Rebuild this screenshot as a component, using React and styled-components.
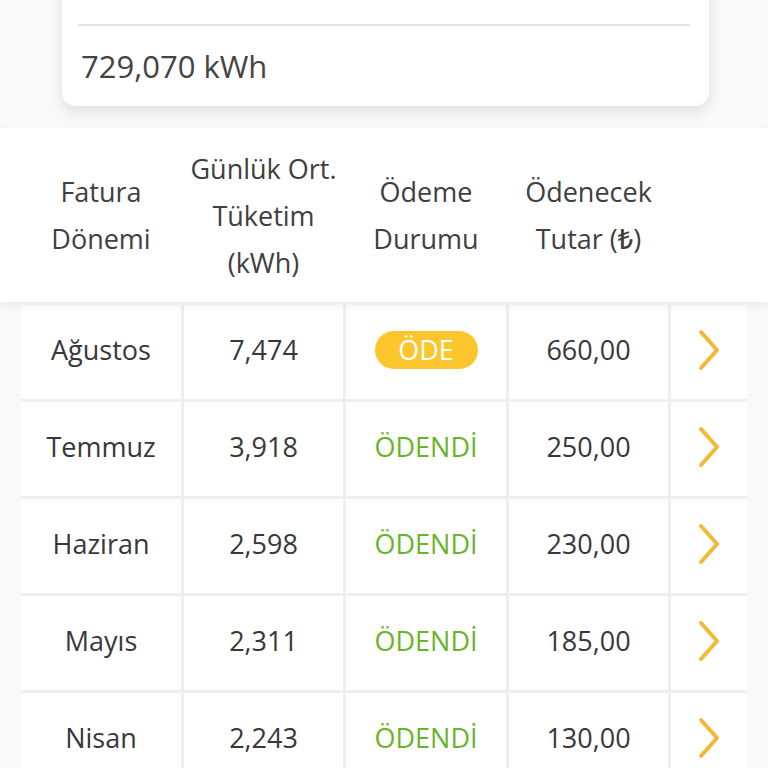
import styled, { createGlobalStyle } from "styled-components";

const GlobalStyle = createGlobalStyle`
    html, body {
        margin: 0;
        padding: 0;
        background: #f9f9f9;
        overflow: hidden;
    }
    body {
        font-family: "Open Sans", "Noto Sans", sans-serif;
        color: #3a3a3a;
    }
`;

const cols = "160px 159px 160px 159px 76px";

const rows = [
    { month: "Ağustos", avg: "7,474", paid: false, amount: "660,00" },
    { month: "Temmuz", avg: "3,918", paid: true, amount: "250,00" },
    { month: "Haziran", avg: "2,598", paid: true, amount: "230,00" },
    { month: "Mayıs", avg: "2,311", paid: true, amount: "185,00" },
    { month: "Nisan", avg: "2,243", paid: true, amount: "130,00" },
];

function Chevron() {
    return (
        <svg width="26" height="44" viewBox="0 0 26 44">
            <polyline
                points="5,4 21,22 5,40"
                fill="none"
                stroke="#f3b834"
                strokeWidth="4"
                strokeLinecap="round"
                strokeLinejoin="round"
            />
        </svg>
    );
}

export default function App() {
    return (
        <Page>
            <GlobalStyle />
            <Card>
                <CardTop />
                <Divider />
                <Total>729,070 kWh</Total>
            </Card>
            <HeaderBand>
                <HeadCell>Fatura<br />Dönemi</HeadCell>
                <HeadCell>Günlük Ort.<br />Tüketim<br />(kWh)</HeadCell>
                <HeadCell>Ödeme<br />Durumu</HeadCell>
                <HeadCell>Ödenecek<br />Tutar (₺)</HeadCell>
                <HeadCell />
            </HeaderBand>
            <Body>
                {rows.map((r) => (
                    <Row key={r.month}>
                        <Cell>{r.month}</Cell>
                        <Cell>{r.avg}</Cell>
                        <Cell>
                            {r.paid ? <Paid>ÖDENDİ</Paid> : <PayButton>ÖDE</PayButton>}
                        </Cell>
                        <Cell>{r.amount}</Cell>
                        <Cell><Chevron /></Cell>
                    </Row>
                ))}
            </Body>
        </Page>
    );
}

const Page = styled.div`
    width: 768px;
    height: 768px;
    overflow: hidden;
`;

const Card = styled.div`
    width: 647px;
    margin: -30px 0 0 62px;
    padding: 0 19px 0 16px;
    box-sizing: border-box;
    background: #ffffff;
    border-radius: 14px;
    box-shadow: 0 6px 14px rgba(0, 0, 0, 0.1);
`;

const CardTop = styled.div`
    height: 54px;
`;

const Divider = styled.div`
    height: 2px;
    background: #e2e2e2;
`;

const Total = styled.div`
    padding: 20px 3px;
    font-size: 31px;
    font-weight: 500;
    line-height: 40px;
    color: #444444;
`;

const HeaderBand = styled.div`
    margin-top: 22px;
    height: 174px;
    background: #ffffff;
    display: grid;
    grid-template-columns: ${cols};
    column-gap: 3px;
    padding-left: 21px;
    align-items: center;
    box-shadow: 0 4px 8px rgba(0, 0, 0, 0.06);
    position: relative;
    z-index: 1;
`;

const HeadCell = styled.div`
    text-align: center;
    font-size: 27px;
    font-weight: 500;
    line-height: 47px;
    color: #404040;
`;

const Body = styled.div`
    margin: 3px 0 0 21px;
    width: 726px;
    display: flex;
    flex-direction: column;
    gap: 3px;
    background: #efefef;
`;

const Row = styled.div`
    display: grid;
    grid-template-columns: ${cols};
    column-gap: 3px;
    height: 94px;
`;

const Cell = styled.div`
    background: #ffffff;
    display: flex;
    align-items: center;
    justify-content: center;
    padding-bottom: 5px;
    box-sizing: border-box;
    font-size: 27px;
    font-weight: 500;
    color: #383838;
`;

const PayButton = styled.span`
    display: inline-flex;
    align-items: center;
    justify-content: center;
    width: 103px;
    height: 38px;
    border-radius: 19px;
    background: #fcc62c;
    color: #ffffff;
    font-size: 27px;
`;

const Paid = styled.span`
    color: #68b42b;
    font-size: 27px;
`;
